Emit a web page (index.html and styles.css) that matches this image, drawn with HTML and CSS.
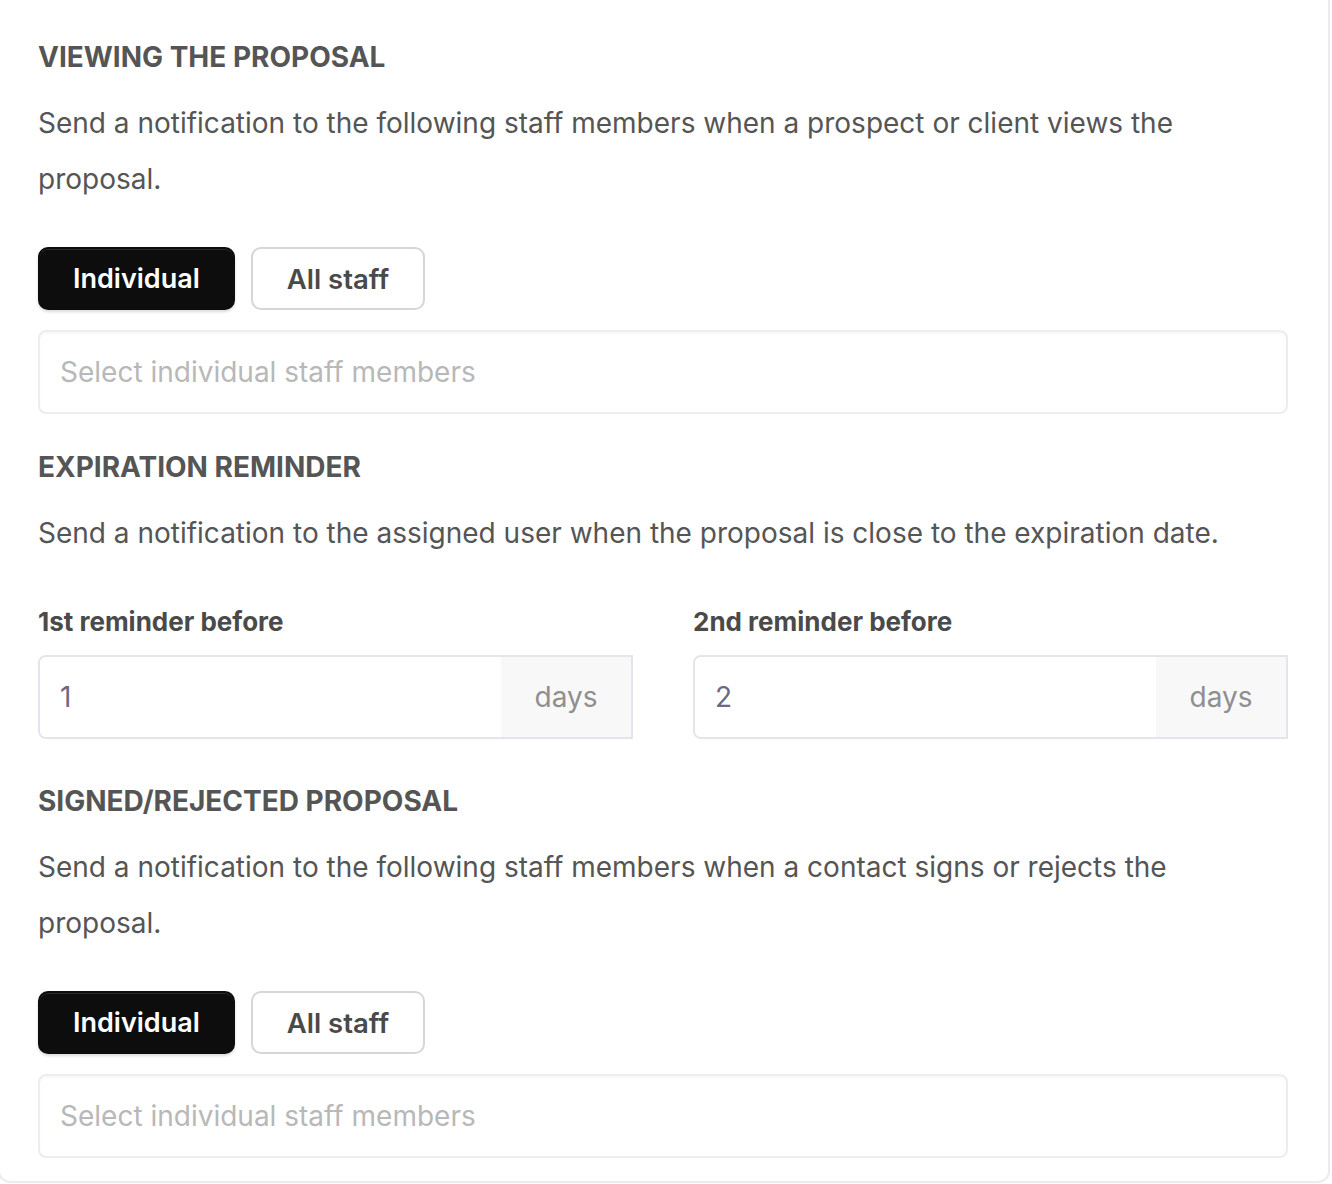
FILE: index.html
```html
<!DOCTYPE html>
<html lang="en">
<head>
    <meta charset="UTF-8">
    <title>Proposal notifications</title>
    <link rel="stylesheet" href="styles.css">
</head>
<body>
    <div class="panel">
        <section class="block">
            <h2>Viewing the proposal</h2>
            <p class="hint">Send a notification to the following staff members when a prospect or client views the proposal.</p>
            <div class="toggle">
                <button class="active">Individual</button>
                <button>All staff</button>
            </div>
            <input class="picker" type="text" placeholder="Select individual staff members">
        </section>

        <section class="block">
            <h2>Expiration reminder</h2>
            <p class="hint">Send a notification to the assigned user when the proposal is close to the expiration date.</p>
            <div class="reminders">
                <label class="field">
                    <span class="field-label">1st reminder before</span>
                    <span class="input-group">
                        <input type="text" value="1">
                        <span class="addon">days</span>
                    </span>
                </label>
                <label class="field">
                    <span class="field-label">2nd reminder before</span>
                    <span class="input-group">
                        <input type="text" value="2">
                        <span class="addon">days</span>
                    </span>
                </label>
            </div>
        </section>

        <section class="block">
            <h2>Signed/rejected proposal</h2>
            <p class="hint">Send a notification to the following staff members when a contact signs or rejects the proposal.</p>
            <div class="toggle">
                <button class="active">Individual</button>
                <button>All staff</button>
            </div>
            <input class="picker" type="text" placeholder="Select individual staff members">
        </section>
    </div>
</body>
</html>
```

FILE: styles.css
```css
body {
    margin: 0;
    background: #fff;
    font-family: Inter, 'Noto Sans', sans-serif;
    color: #4f4f4f;
}
.panel {
    margin: -20px 2px 0 -2px;
    padding: 58px 40px 23px 38px;
    border: 2px solid #ececec;
    border-radius: 12px;
    background: #fff;
}
.block h2 {
    margin: 0;
    font-size: 28px;
    line-height: 34px;
    font-weight: 700;
    text-transform: uppercase;
    color: #555;
}
.hint {
    margin: 21px 0 0;
    font-size: 28px;
    line-height: 56px;
    color: #555;
}
.toggle {
    display: flex;
    gap: 16px;
    margin-top: 40px;
}
.toggle button {
    height: 63px;
    padding: 0 33px;
    border: 2px solid #d6d6d6;
    border-radius: 10px;
    background: #fff;
    color: #4a4a4a;
    font-family: inherit;
    font-size: 27px;
    font-weight: 600;
    cursor: pointer;
}
.toggle button + button {
    padding: 0 34px;
    font-size: 27.5px;
}
.toggle button.active {
    border-color: #0d0d0d;
    background: #0d0d0d;
    color: #fff;
    box-shadow: 0 2px 3px rgba(0,0,0,0.15), inset 0 1px 0 rgba(255,255,255,0.12);
}
.picker {
    display: block;
    box-sizing: border-box;
    width: 100%;
    height: 84px;
    margin: 20px 0 0;
    padding: 0 20px;
    border: 2px solid #ededed;
    border-radius: 8px;
    box-shadow: inset 0 2px 2px rgba(0,0,0,0.03);
    font-family: inherit;
    font-size: 28px;
    color: #444;
    outline: none;
}
.picker::placeholder {
    color: #b8b8b8;
}
.block + .block {
    margin-top: 36px;
}
.reminders {
    display: grid;
    grid-template-columns: minmax(0, 1fr) minmax(0, 1fr);
    gap: 60px;
    margin-top: 45px;
    padding-bottom: 9px;
}
.field {
    display: flex;
    flex-direction: column;
    gap: 17px;
    min-width: 0;
}
.field-label {
    font-size: 26px;
    line-height: 32px;
    font-weight: 700;
    color: #4a4a4a;
}
.input-group {
    display: flex;
    height: 84px;
    box-sizing: border-box;
    border: 2px solid #e3e5ec;
    border-radius: 8px 0 0 8px;
    overflow: hidden;
}
.input-group input {
    flex: 1;
    width: 0;
    min-width: 0;
    padding: 0 20px;
    border: 0;
    font-family: inherit;
    font-size: 28px;
    color: #6d6886;
    outline: none;
}
.addon {
    display: flex;
    align-items: center;
    justify-content: center;
    width: 130px;
    background: #f8f8f9;
    font-size: 28px;
    color: #8f8f8f;
}
```
